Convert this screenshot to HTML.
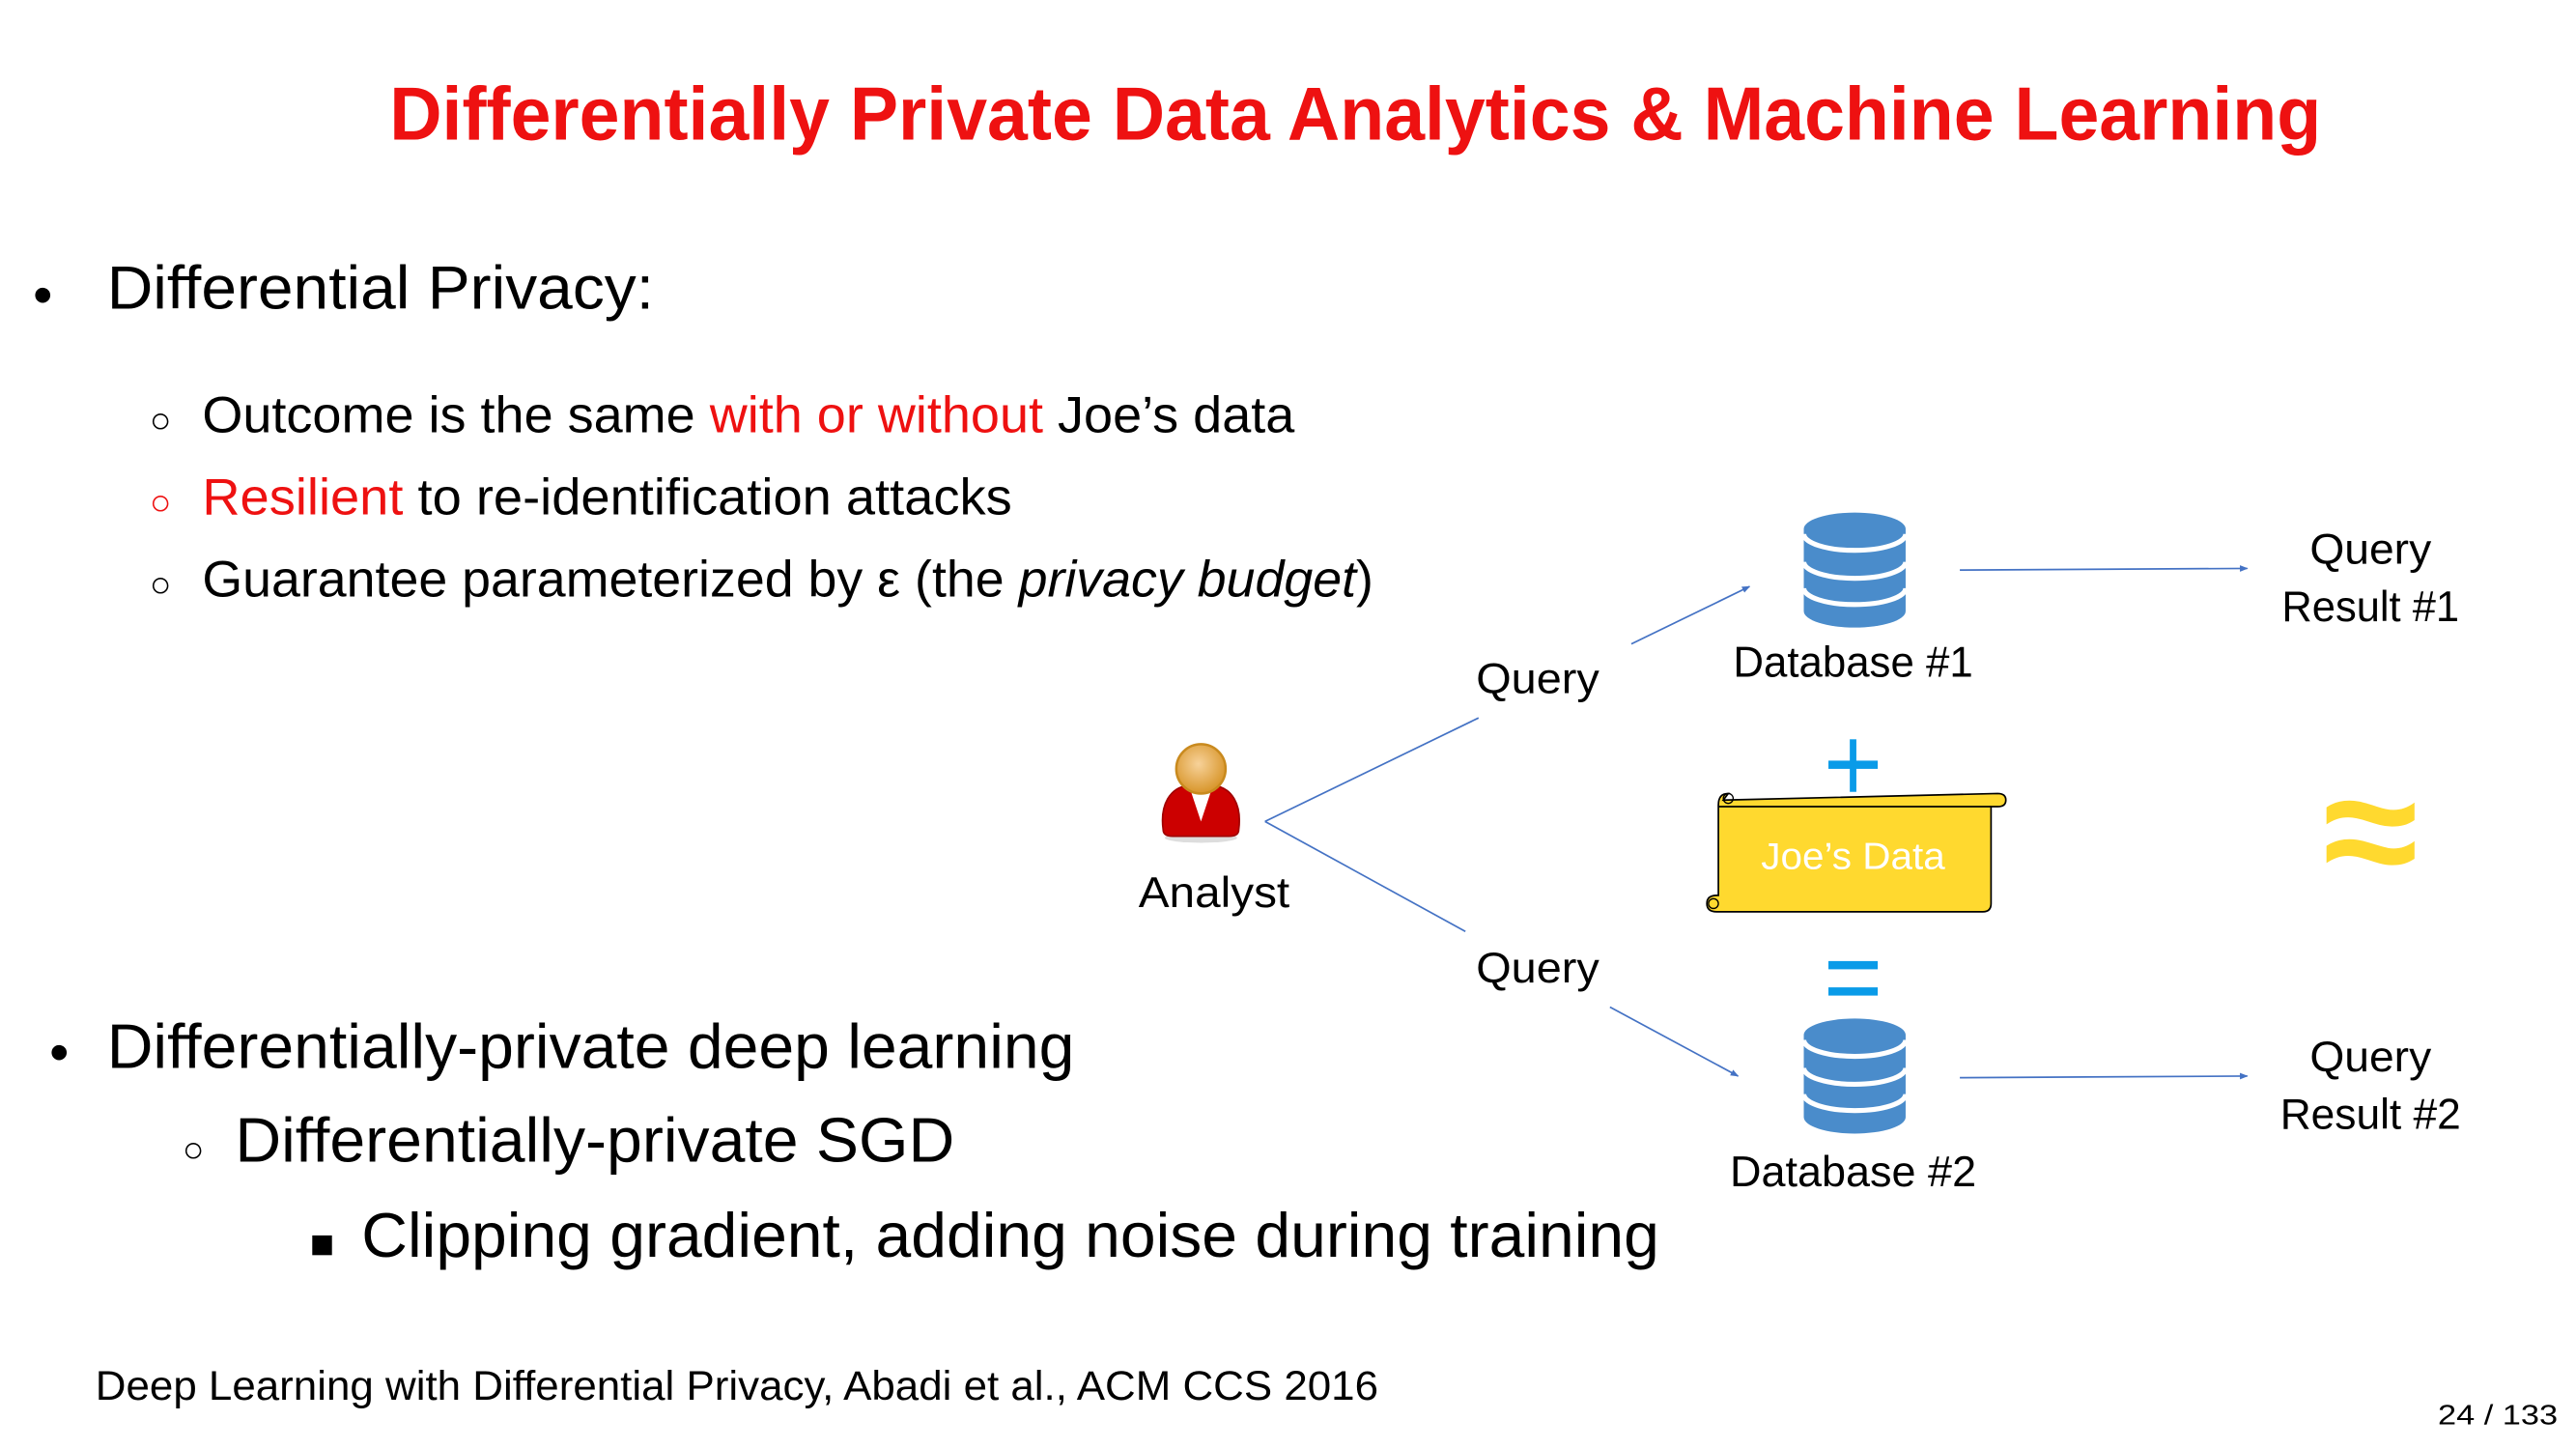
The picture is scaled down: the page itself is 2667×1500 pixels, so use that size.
<!DOCTYPE html>
<html><head><meta charset="utf-8"><style>
html,body{margin:0;padding:0;background:#fff;}
svg{display:block;}
text{font-family:"Liberation Sans",sans-serif;}
</style></head><body>
<svg width="2667" height="1500" viewBox="0 0 1568 882" xmlns="http://www.w3.org/2000/svg">
<defs>
<marker id="ah" viewBox="0 0 10 10" refX="9" refY="5" markerWidth="5" markerHeight="5" orient="auto"><path d="M0,1 L10,5 L0,9 z" fill="#4472c4"/></marker>
<radialGradient id="hg" cx="0.45" cy="0.4" r="0.6"><stop offset="0" stop-color="#f7d29a"/><stop offset="1" stop-color="#d8952a"/></radialGradient>
</defs>
<text x="237" y="85" font-size="46" font-weight="bold" fill="#ee1111" textLength="1176" lengthAdjust="spacingAndGlyphs">Differentially Private Data Analytics &amp; Machine Learning</text>

<text x="20" y="191" font-size="34">•</text>
<text x="65" y="188" font-size="37" textLength="333" lengthAdjust="spacingAndGlyphs">Differential Privacy:</text>

<text x="91" y="263" font-size="22">○</text>
<text x="123" y="263" font-size="31" textLength="665" lengthAdjust="spacingAndGlyphs">Outcome is the same <tspan fill="#ee1111">with or without</tspan> Joe’s data</text>
<text x="91" y="313" font-size="22" fill="#ee1111">○</text>
<text x="123" y="313" font-size="31" textLength="493" lengthAdjust="spacingAndGlyphs"><tspan fill="#ee1111">Resilient</tspan> to re-identification attacks</text>
<text x="91" y="363" font-size="22">○</text>
<text x="123" y="363" font-size="31" textLength="713" lengthAdjust="spacingAndGlyphs">Guarantee parameterized by ε (the <tspan font-style="italic">privacy budget</tspan>)</text>

<text x="30" y="652" font-size="34">•</text>
<text x="65" y="650" font-size="38" textLength="589" lengthAdjust="spacingAndGlyphs">Differentially-private deep learning</text>
<text x="111" y="707" font-size="22">○</text>
<text x="143" y="707" font-size="38" textLength="438" lengthAdjust="spacingAndGlyphs">Differentially-private SGD</text>
<rect x="190" y="752" width="12" height="12" fill="#000"/>
<text x="220" y="765" font-size="38" textLength="790" lengthAdjust="spacingAndGlyphs">Clipping gradient, adding noise during training</text>

<text x="58" y="852" font-size="25" textLength="781" lengthAdjust="spacingAndGlyphs">Deep Learning with Differential Privacy, Abadi et al., ACM CCS 2016</text>
<text x="1484" y="867" font-size="17" textLength="73" lengthAdjust="spacingAndGlyphs">24 / 133</text>

<!-- analyst -->
<ellipse cx="731" cy="510" rx="22" ry="3" fill="#ddd"/>
<path d="M708,505 C706,490 712,479 724,478 L738,478 C750,479 756,490 754,505 Q754,509 748,509 L714,509 Q708,509 708,505 Z" fill="#cc0000" stroke="#a00000" stroke-width="1"/>
<path d="M724,479 L731,500 L738,479 Z" fill="#fff"/>
<circle cx="731" cy="468" r="15" fill="url(#hg)" stroke="#c98a1e" stroke-width="1.5"/>
<text x="739" y="552" font-size="26" text-anchor="middle" textLength="92" lengthAdjust="spacingAndGlyphs">Analyst</text>

<g stroke="#4472c4" stroke-width="1" fill="none">
<line x1="770" y1="500" x2="900" y2="437"/>
<line x1="770" y1="500" x2="892" y2="567"/>
<line x1="993" y1="392" x2="1065" y2="357" marker-end="url(#ah)"/>
<line x1="980" y1="613" x2="1058" y2="655" marker-end="url(#ah)"/>
<line x1="1193" y1="347" x2="1368" y2="346" marker-end="url(#ah)"/>
<line x1="1193" y1="656" x2="1368" y2="655" marker-end="url(#ah)"/>
</g>
<text x="936" y="422" font-size="26" text-anchor="middle" textLength="75" lengthAdjust="spacingAndGlyphs">Query</text>
<text x="936" y="598" font-size="26" text-anchor="middle" textLength="75" lengthAdjust="spacingAndGlyphs">Query</text>

<!-- db1 -->
<path fill="#4a8ccb" d="M1098,322 A31,10 0 0 1 1160,322 L1160,372 A31,10 0 0 1 1098,372 Z"/>
<g fill="none" stroke="#fff" stroke-width="3">
<path d="M1098,325 A31,10 0 0 0 1160,325"/>
<path d="M1098,342 A31,10 0 0 0 1160,342"/>
<path d="M1098,358 A31,10 0 0 0 1160,358"/>
</g>
<text x="1128" y="412" font-size="26" text-anchor="middle" textLength="146" lengthAdjust="spacingAndGlyphs">Database #1</text>
<!-- db2 -->
<path fill="#4a8ccb" d="M1098,630 A31,10 0 0 1 1160,630 L1160,680 A31,10 0 0 1 1098,680 Z"/>
<g fill="none" stroke="#fff" stroke-width="3">
<path d="M1098,633 A31,10 0 0 0 1160,633"/>
<path d="M1098,650 A31,10 0 0 0 1160,650"/>
<path d="M1098,666 A31,10 0 0 0 1160,666"/>
</g>
<text x="1128" y="722" font-size="26" text-anchor="middle" textLength="150" lengthAdjust="spacingAndGlyphs">Database #2</text>

<text x="1443" y="343" font-size="26" text-anchor="middle" textLength="74" lengthAdjust="spacingAndGlyphs">Query</text>
<text x="1443" y="378" font-size="26" text-anchor="middle" textLength="108" lengthAdjust="spacingAndGlyphs">Result #1</text>
<text x="1443" y="652" font-size="26" text-anchor="middle" textLength="74" lengthAdjust="spacingAndGlyphs">Query</text>
<text x="1443" y="687" font-size="26" text-anchor="middle" textLength="110" lengthAdjust="spacingAndGlyphs">Result #2</text>

<!-- plus -->
<rect x="1126" y="450" width="4" height="32" fill="#0a9be8"/>
<rect x="1113" y="463" width="30" height="5" fill="#0a9be8"/>
<!-- scroll -->
<path d="M1049,487 L1216,483 Q1221,483 1221,487 Q1221,491 1216,491 L1212,491 L1212,550 Q1212,555 1207,555 L1045,555 Q1039,555 1039,550 Q1039,545 1045,545 L1046,545 L1046,490 Q1046,483 1052,483 Z" fill="#ffd92f" stroke="#000" stroke-width="1"/>
<path d="M1046,491 L1212,491" stroke="#000" stroke-width="1"/>
<circle cx="1052" cy="486" r="3" fill="none" stroke="#000" stroke-width="0.8"/>
<circle cx="1043" cy="550" r="3" fill="none" stroke="#000" stroke-width="0.8"/>
<text x="1128" y="529" font-size="23" fill="#fff" text-anchor="middle" textLength="112" lengthAdjust="spacingAndGlyphs">Joe’s Data</text>
<!-- equals -->
<rect x="1113" y="585" width="30" height="5" fill="#0a9be8"/>
<rect x="1113" y="601" width="30" height="5" fill="#0a9be8"/>
<text x="1443" y="540" font-size="100" fill="#ffd92f" text-anchor="middle" font-weight="bold" textLength="58" lengthAdjust="spacingAndGlyphs">≈</text>
</svg>
</body></html>
